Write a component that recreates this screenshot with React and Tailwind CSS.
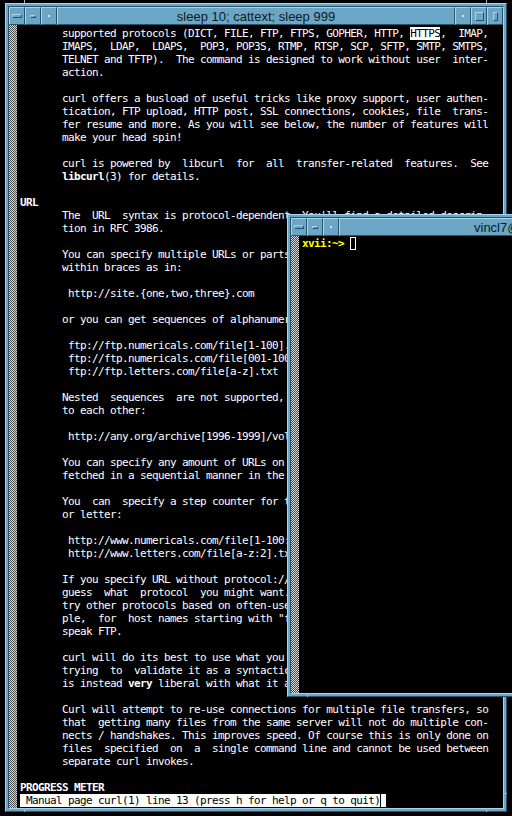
import React from 'react';

const R = 'border border-t-[#a9d5ec] border-l-[#a9d5ec] border-b-[#285269] border-r-[#285269]';
const S = 'border border-t-[#285269] border-l-[#285269] border-b-[#a9d5ec] border-r-[#a9d5ec]';

function TitleBar({ title, titleClass }) {
  return (
    <div className="flex h-[18px] shrink-0 bg-[#6ca6c6]">
      <div className={`${R} w-[16px] flex items-center justify-center`}>
        <div className={`${R} w-[10px] h-[4px]`} />
      </div>
      <div className={`${R} w-[16px] flex items-center justify-center`}>
        <div className={`${R} w-[6px] h-[3px]`} />
      </div>
      <div className={`${R} w-[16px] flex items-center justify-center`}>
        <div className="w-[2px] h-[2px] bg-[#c8e6f6]" />
      </div>
      <div className={`${R} flex-1 flex items-center overflow-hidden whitespace-nowrap font-['Liberation_Sans',sans-serif] text-[13px] leading-none text-[#0b1a24] ${titleClass}`}>
        {title}
      </div>
      <div className={`${R} w-[16px] flex items-center justify-center`}>
        <div className="w-[2px] h-[2px] bg-[#c8e6f6]" />
      </div>
      <div className={`${R} w-[16px] flex items-center justify-center`}>
        <div className={`${R} w-[9px] h-[9px]`} />
      </div>
      <div className={`${R} w-[16px] flex items-center justify-center`}>
        <div className={`${R} w-[5px] h-[9px]`} />
      </div>
    </div>
  );
}

function Frame({ className, title, titleClass, children }) {
  return (
    <div className={`absolute bg-[#6ca6c6] p-[2px] ${R} ${className}`}>
      <div className={`flex flex-col w-full h-full ${S}`}>
        <TitleBar title={title} titleClass={titleClass} />
        <div className="flex flex-1 min-h-0 bg-black">
          <div className="w-[8px] shrink-0 bg-[repeating-conic-gradient(#d8d8d8_0_25%,#4a4a4a_0_50%)] bg-[length:2px_2px]" />
          {children}
        </div>
      </div>
    </div>
  );
}

const I = '       ';
const lines = [
  [[I + 'supported protocols (DICT, FILE, FTP, FTPS, GOPHER, HTTP, '], ['HTTPS', 'r'], [',  IMAP,']],
  [[I + 'IMAPS,  LDAP,  LDAPS,  POP3, POP3S, RTMP, RTSP, SCP, SFTP, SMTP, SMTPS,']],
  [[I + 'TELNET and TFTP).  The command is designed to work without user  inter-']],
  [[I + 'action.']],
  [],
  [[I + 'curl offers a busload of useful tricks like proxy support, user authen-']],
  [[I + 'tication, FTP upload, HTTP post, SSL connections, cookies, file  trans-']],
  [[I + 'fer resume and more. As you will see below, the number of features will']],
  [[I + 'make your head spin!']],
  [],
  [[I + 'curl is powered by  libcurl  for  all  transfer-related  features.  See']],
  [[I], ['libcurl', 'b'], ['(3) for details.']],
  [],
  [['URL', 'b']],
  [[I + "The  URL  syntax is protocol-dependent. You'll find a detailed descrip-"]],
  [[I + 'tion in RFC 3986.']],
  [],
  [[I + 'You can specify multiple URLs or parts of URLs by writing part sets']],
  [[I + 'within braces as in:']],
  [],
  [[I + ' http://site.{one,two,three}.com']],
  [],
  [[I + 'or you can get sequences of alphanumeric series by using [] as in:']],
  [],
  [[I + ' ftp://ftp.numericals.com/file[1-100].txt']],
  [[I + ' ftp://ftp.numericals.com/file[001-100].txt    (with leading zeros)']],
  [[I + ' ftp://ftp.letters.com/file[a-z].txt']],
  [],
  [[I + 'Nested  sequences  are not supported, but you can use several ones next']],
  [[I + 'to each other:']],
  [],
  [[I + ' http://any.org/archive[1996-1999]/vol[1-4]/part{a,b,c}.html']],
  [],
  [[I + 'You can specify any amount of URLs on the command line.  They will be']],
  [[I + 'fetched in a sequential manner in the specified order.']],
  [],
  [[I + 'You  can  specify a step counter for the ranges to get every Nth number']],
  [[I + 'or letter:']],
  [],
  [[I + ' http://www.numericals.com/file[1-100:10].txt']],
  [[I + ' http://www.letters.com/file[a-z:2].txt']],
  [],
  [[I + 'If you specify URL without protocol:// prefix, curl will attempt to']],
  [[I + 'guess  what  protocol  you might want. It will then default to HTTP but']],
  [[I + 'try other protocols based on often-used host name prefixes. For exam-']],
  [[I + 'ple,  for  host names starting with "ftp." curl will assume you want to']],
  [[I + 'speak FTP.']],
  [],
  [[I + 'curl will do its best to use what you pass to it as a URL. It is not']],
  [[I + 'trying  to  validate it as a syntactically correct URL by any means but']],
  [[I + 'is instead '], ['very', 'b'], [' liberal with what it accepts.']],
  [],
  [[I + 'Curl will attempt to re-use connections for multiple file transfers, so']],
  [[I + 'that  getting many files from the same server will not do multiple con-']],
  [[I + 'nects / handshakes. This improves speed. Of course this is only done on']],
  [[I + 'files  specified  on  a  single command line and cannot be used between']],
  [[I + 'separate curl invokes.']],
  [],
  [['PROGRESS METER', 'b']],
];

const mono = "font-['DejaVu_Sans_Mono',monospace] text-[11px] tracking-[-0.62px] leading-[13px]";

function Line({ segs }) {
  return (
    <div className="h-[13px] whitespace-pre">
      {segs.map(([t, s], i) => (
        <span
          key={i}
          className={s === 'b' ? 'font-bold' : s === 'r' ? 'bg-white text-black' : ''}
        >
          {t}
        </span>
      ))}
    </div>
  );
}

function Notch({ className }) {
  return <div className={`absolute bg-[#8fc0da] ${className}`} />;
}

export default function App() {
  return (
    <div className="relative w-[512px] h-[816px] overflow-hidden bg-black">
      <Notch className="left-[24px] top-0 w-px h-[5px]" />
      <Notch className="left-[486px] top-0 w-px h-[5px]" />
      <Frame className="left-[5px] top-[3px] w-[502px] h-[809px]" title="sleep 10; cattext; sleep 999" titleClass="justify-center">
        <div className={`flex-1 pl-[3px] pt-[2px] text-white ${mono}`}>
          {lines.map((segs, i) => (
            <Line key={i} segs={segs} />
          ))}
          <div className="h-[13px] whitespace-pre flex">
            <span className="bg-white text-black">{' Manual page curl(1) line 13 (press h for help or q to quit)'}</span>
            <span className="ml-px w-[5px] h-[13px] bg-white" />
          </div>
        </div>
      </Frame>
      <Notch className="left-[24px] top-[808px] w-px h-[4px]" />
      <Notch className="left-[486px] top-[808px] w-px h-[4px]" />
      <Notch className="left-[503px] top-[793px] w-[4px] h-px" />

      <Frame className="left-[287px] top-[214px] w-[452px] h-[483px]" title="vincl7@xvii: ~" titleClass="pl-[134px]">
        <div className={`flex-1 pl-[3px] pt-[1px] ${mono}`}>
          <div className="h-[13px] whitespace-pre flex items-center">
            <span className="font-bold text-[#ffff00]">{'xvii:~> '}</span>
            <span className="w-[6px] h-[13px] border border-white" />
          </div>
        </div>
      </Frame>
      <Notch className="left-[307px] top-[693px] w-px h-[4px]" />
    </div>
  );
}
